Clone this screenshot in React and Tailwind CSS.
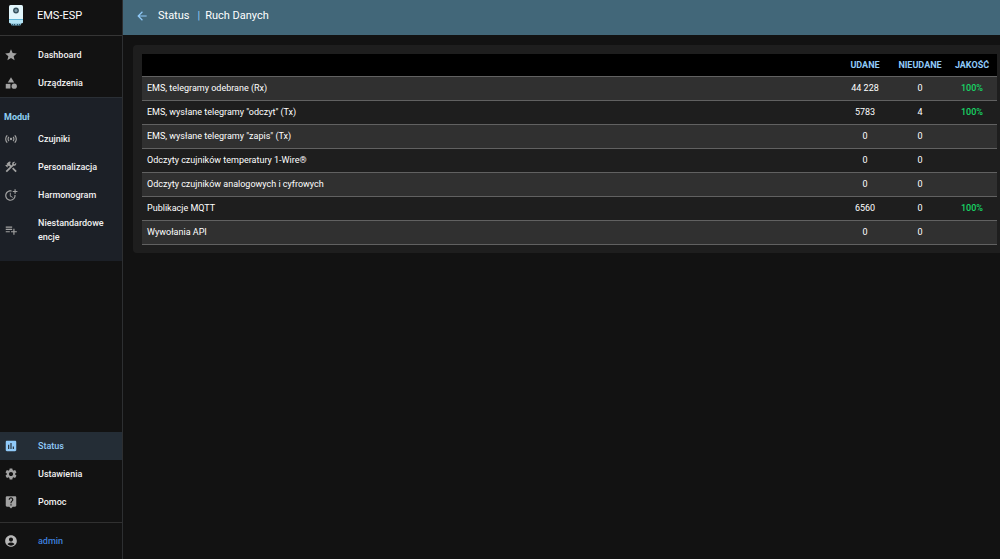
import React from 'react';
import {
  MdAccountCircle,
  MdArrowBack,
  MdAssessment,
  MdCategory,
  MdConstruction,
  MdLiveHelp,
  MdMoreTime,
  MdPlaylistAdd,
  MdSensors,
  MdSettings,
  MdStar,
} from 'react-icons/md';

const mainMenu = [
  { label: 'Dashboard', icon: MdStar },
  { label: 'Urządzenia', icon: MdCategory },
];

const moduleMenu = [
  { label: 'Czujniki', icon: MdSensors },
  { label: 'Personalizacja', icon: MdConstruction },
  { label: 'Harmonogram', icon: MdMoreTime },
  { label: 'Niestandardowe encje', icon: MdPlaylistAdd },
];

const bottomMenu = [
  { label: 'Status', icon: MdAssessment, active: true },
  { label: 'Ustawienia', icon: MdSettings },
  { label: 'Pomoc', icon: MdLiveHelp },
];

const stats = [
  { name: 'EMS, telegramy odebrane (Rx)', success: '44 228', fail: '0', quality: '100%' },
  { name: 'EMS, wysłane telegramy "odczyt" (Tx)', success: '5783', fail: '4', quality: '100%' },
  { name: 'EMS, wysłane telegramy "zapis" (Tx)', success: '0', fail: '0', quality: '' },
  { name: 'Odczyty czujników temperatury 1-Wire®', success: '0', fail: '0', quality: '' },
  { name: 'Odczyty czujników analogowych i cyfrowych', success: '0', fail: '0', quality: '' },
  { name: 'Publikacje MQTT', success: '6560', fail: '0', quality: '100%' },
  { name: 'Wywołania API', success: '0', fail: '0', quality: '' },
];

const Logo = () => (
  <svg viewBox="0 0 16 22" className="w-4 h-[22px]" aria-hidden="true">
    <path d="M3 17h10v2q0 1.500-1.500 1.500h-7Q3 20.500 3 19z" fill="#7fb4cc" />
    <rect x="1" y="0" width="14" height="18" rx="1.500" fill="#e2f6fc" />
    <path d="M1 14h14v1H1z" fill="#5fb4d6" />
    <path d="M1 15h14v2q0 1-1.500 1.500h-11Q1 18 1 17z" fill="#b4e4f5" />
    <circle cx="8" cy="5.500" r="2.900" fill="#35505c" />
    <circle cx="8" cy="5.500" r="1.500" fill="#7f9fae" />
    <path d="M4 19h1v2H4zM6 19h1v2H6zM9 19h1v2H9zM11 19h1v2h-1z" fill="#2f5668" />
  </svg>
);

const MenuItem = ({ label, icon: Icon, active }) => (
  <li>
    <a
      href="#"
      className={`flex min-h-7 items-center py-[7px] pl-1 pr-2 ${
        active ? 'bg-[#242d36] text-[#90caf9]' : 'text-[#f0f0f0]'
      }`}
    >
      <Icon className={`mr-5 h-[14px] w-[14px] shrink-0 ${active ? 'text-[#90caf9]' : 'text-[#a2a2a2]'}`} />
      <span>{label}</span>
    </a>
  </li>
);

const Sidebar = () => (
  <nav className="flex w-[123px] shrink-0 flex-col border-r border-[#2d2f31] text-[9px] font-medium leading-[14px]">
    <div className="flex h-9 items-center gap-3 border-b border-[#353535] pl-2 pb-1">
      <Logo />
      <h1 className="pl-px text-[11px] font-normal text-white">EMS-ESP</h1>
    </div>
    <ul className="pt-[5px]">
      {mainMenu.map((item) => (
        <MenuItem key={item.label} {...item} />
      ))}
    </ul>
    <div className="border-t border-[#2a2f35] bg-[#1c2027] pt-3 pb-[10px]">
      <h2 className="pl-1 text-[9px] font-bold leading-[15px] text-[#8fd0f4]">Moduł</h2>
      <ul>
        {moduleMenu.map((item) => (
          <MenuItem key={item.label} {...item} />
        ))}
      </ul>
    </div>
    <ul className="mt-auto pb-[6px]">
      {bottomMenu.map((item) => (
        <MenuItem key={item.label} {...item} />
      ))}
    </ul>
    <div className="border-t border-[#303030] py-1">
      <button type="button" className="flex h-7 w-full items-center pl-1 text-[#3f7fdc]">
        <MdAccountCircle className="mr-5 h-[14px] w-[14px] text-[#b8b8b8]" />
        admin
      </button>
    </div>
  </nav>
);

const StatsTable = () => (
  <table className="w-full table-fixed border-collapse text-[9px] leading-3 text-white">
    <thead>
      <tr className="h-[22px] bg-black text-[#90caf9]">
        <th aria-label="Nazwa"></th>
        <th className="w-14 font-bold">UDANE</th>
        <th className="w-[54px] font-bold">NIEUDANE</th>
        <th className="w-[50px] font-bold">JAKOŚĆ</th>
      </tr>
    </thead>
    <tbody>
      {stats.map((row) => (
        <tr key={row.name} className="h-6 border-y border-[#616161] odd:bg-[#303030] even:bg-[#1e1e1e]">
          <td className="pl-[5px]">{row.name}</td>
          <td className="text-center">{row.success}</td>
          <td className="text-center">{row.fail}</td>
          <td className="text-center font-medium text-[#17d665]">{row.quality}</td>
        </tr>
      ))}
    </tbody>
  </table>
);

export default function App() {
  return (
    <div className="flex min-h-screen bg-[#121212] font-['Roboto','Liberation_Sans',sans-serif]">
      <Sidebar />
      <div className="min-w-0 flex-1">
        <header className="flex h-[35px] items-center bg-[#426779] pl-3 pb-[3px] text-[11px] text-white">
          <button type="button" aria-label="Wstecz" className="mr-[9px] text-[#90caf9]">
            <MdArrowBack className="h-[14px] w-[14px]" />
          </button>
          <span>Status</span>
          <span className="mx-[5px] pl-[3px] text-[#90caf9]">|</span>
          <span>Ruch Danych</span>
        </header>
        <main className="pt-[10px] pl-[10px]">
          <section className="rounded-l-sm bg-[#1e1e1e] pt-[9px] pr-[3px] pb-2 pl-[9px]">
            <StatsTable />
          </section>
        </main>
      </div>
    </div>
  );
}
